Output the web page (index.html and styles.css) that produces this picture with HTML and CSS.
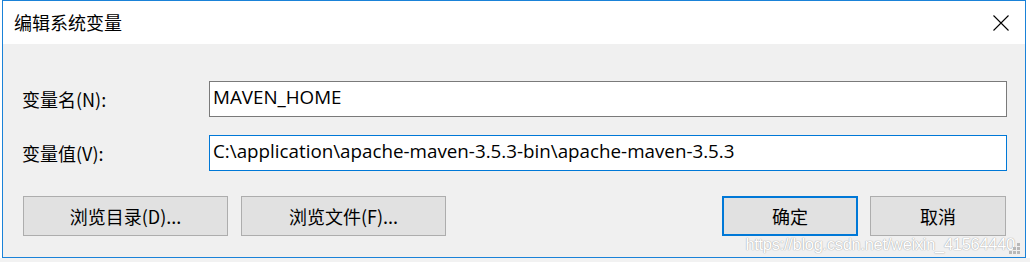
FILE: index.html
```html
<!DOCTYPE html>
<html lang="zh-CN">
<head>
    <meta charset="UTF-8">
    <title>编辑系统变量</title>
    <link rel="stylesheet" href="styles.css">
</head>
<body>
    <div class="dialog">
        <div class="titlebar">
            <span class="title">编辑系统变量</span>
            <svg class="close" width="16" height="16" viewBox="0 0 16 16">
                <path d="M0.5 0.5 L15.5 15.5 M15.5 0.5 L0.5 15.5" stroke="#000" stroke-width="1.1" fill="none"/>
            </svg>
        </div>
        <div class="content">
            <div class="fields">
                <label class="label">变量名(N):</label>
                <div class="input">MAVEN_HOME</div>
                <label class="label">变量值(V):</label>
                <div class="input focused">C:\application\apache-maven-3.5.3-bin\apache-maven-3.5.3</div>
            </div>
            <div class="buttons">
                <button class="btn wide">浏览目录(D)...</button>
                <button class="btn wide">浏览文件(F)...</button>
                <span class="spacer"></span>
                <button class="btn default">确定</button>
                <button class="btn">取消</button>
            </div>
            <span class="watermark">https://blog.csdn.net/weixin_41564440</span>
            <svg class="grip" width="12" height="12" viewBox="0 0 12 12">
                <rect x="8" y="0" width="3" height="3" fill="#b8b8b8"/>
                <rect x="4" y="4" width="3" height="3" fill="#b8b8b8"/>
                <rect x="8" y="4" width="3" height="3" fill="#b8b8b8"/>
                <rect x="0" y="8" width="3" height="3" fill="#b8b8b8"/>
                <rect x="4" y="8" width="3" height="3" fill="#b8b8b8"/>
                <rect x="8" y="8" width="3" height="3" fill="#b8b8b8"/>
            </svg>
        </div>
    </div>
    <div class="behind"></div>
</body>
</html>
```

FILE: styles.css
```css
body {
    margin: 0;
    background-color: #ffffff;
    font-family: "Noto Sans CJK SC", sans-serif;
    font-size: 18px;
    color: #000000;
}
.dialog {
    width: 1022px;
    height: 256px;
    margin-left: 2px;
    border: 1px solid #1a82d8;
    display: flex;
    flex-direction: column;
}
.titlebar {
    height: 43px;
    background-color: #ffffff;
    display: flex;
    align-items: center;
    justify-content: space-between;
    padding: 0 16px 0 11px;
}
.title {
    font-size: 18px;
    line-height: 1;
    margin-top: -2px;
}
.content {
    flex: 1;
    background-color: #f0f0f0;
    padding: 37px 18px 0 19px;
    position: relative;
}
.fields {
    display: grid;
    grid-template-columns: 187px 1fr;
    row-gap: 18px;
    align-items: center;
}
.label {
    font-size: 18px;
    line-height: 1;
}
.input {
    height: 34px;
    border: 1px solid #7a7a7a;
    background-color: #ffffff;
    padding: 0 3px;
    font-family: "Open Sans", "Noto Sans CJK SC", sans-serif;
    font-size: 18.8px;
    line-height: 31px;
}
.input.focused {
    border-color: #0078d7;
}
.buttons {
    display: flex;
    margin-top: 25px;
    padding-left: 1px;
    gap: 13px;
}
.spacer {
    flex: 1;
}
.btn {
    width: 136px;
    height: 40px;
    border: 1px solid #adadad;
    background-color: #e1e1e1;
    font-family: "Noto Sans CJK SC", sans-serif;
    font-size: 18px;
    color: #000000;
    padding: 0;
    margin: 0;
}
.btn.wide {
    width: 205px;
}
.btn.default {
    border: 2px solid #0078d7;
    margin-right: -1px;
}
.buttons .btn:last-child {
    margin-right: 1px;
}
.watermark {
    position: absolute;
    right: 10px;
    bottom: 3px;
    font-family: "Liberation Sans", Arial, sans-serif;
    font-size: 16.5px;
    letter-spacing: -0.3px;
    color: #ffffff;
    text-shadow: 0 0 1px #a8a8a8, 0 0 1px #a8a8a8;
}
.grip {
    position: absolute;
    right: 4px;
    bottom: 2px;
}
.behind {
    height: 4px;
    background-color: #f2f2f2;
}
```
